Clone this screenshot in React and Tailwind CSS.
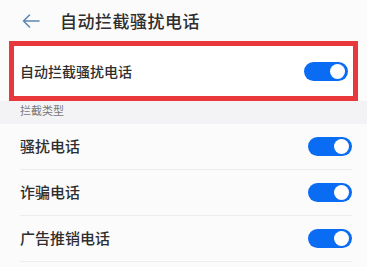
import React from "react";

function Toggle() {
  return (
    <div className="flex h-[19px] w-[44px] items-center justify-end rounded-full bg-[#0a6cf2] pr-[3px]">
      <div className="h-[15px] w-[15px] rounded-full bg-white" />
    </div>
  );
}

const rows = ["骚扰电话", "诈骗电话", "广告推销电话"];

export default function App() {
  return (
    <div
      className="h-[267px] w-[367px] overflow-hidden bg-[#fbfbfc] text-[#2e2e2e]"
      style={{ fontFamily: '"Noto Sans CJK SC", "Noto Sans", sans-serif' }}
    >
      <header className="flex h-[41px] items-center pl-[22px]">
        <svg width="18" height="14" viewBox="0 0 18 14" fill="none" stroke="#5d88b3" strokeWidth="1.6" strokeLinecap="round" strokeLinejoin="round">
          <path d="M17 7H1.5M7.5 1L1.5 7l6 6" />
        </svg>
        <h1 className="ml-[20px] text-[17px] font-medium leading-none tracking-[0.5px]">自动拦截骚扰电话</h1>
      </header>

      <div className="mx-[9px] flex h-[60px] items-center justify-between border-[5px] border-[#e8383b] bg-white pl-[6px] pr-[5px]">
        <span className="text-[14px] font-medium">自动拦截骚扰电话</span>
        <Toggle />
      </div>

      <div className="flex h-[23px] items-start bg-[#f3f3f5] pl-[20px] pt-[1px] text-[11px] text-[#777]">拦截类型</div>

      <ul className="pl-[20px] pr-[15px]">
        {rows.map((r) => (
          <li key={r} className="flex h-[46px] items-center justify-between border-b border-[#ececef]">
            <span className="text-[15px] font-medium">{r}</span>
            <Toggle />
          </li>
        ))}
      </ul>
    </div>
  );
}
